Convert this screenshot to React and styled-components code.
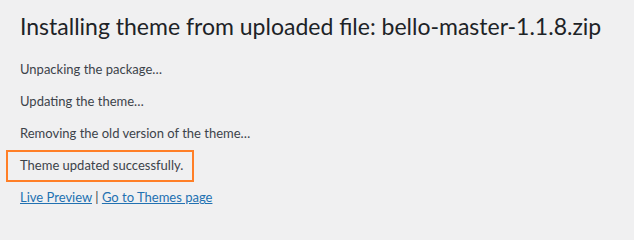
import React from 'react';
import styled, { createGlobalStyle } from 'styled-components';

const GlobalStyle = createGlobalStyle`
  html, body { margin: 0; padding: 0; background: #f0f0f1; }
  body { font-family: Lato, "Liberation Sans", Arial, sans-serif; color: #3c434a; }
`;

const Wrap = styled.div`
  padding: 12px 20px 20px;
`;

const Title = styled.h1`
  margin: 0 0 18.5px;
  font-size: 23px;
  font-weight: 400;
  line-height: 1.3;
  color: #1d2327;
`;

const Steps = styled.div`
  display: flex;
  flex-direction: column;
  gap: 13px;
`;

const Step = styled.p`
  margin: 0;
  font-size: 13px;
  line-height: 19px;
  color: #3c434a;
`;

const Highlight = styled(Step)`
  align-self: flex-start;
  border: 2px solid #ff7f27;
  padding: 4.5px 9px 4.5px 12px;
  margin: -6.5px 0 -6.5px -14px;
`;

const Link = styled.a`
  color: #2271b1;
  text-decoration: underline;
  cursor: pointer;
`;

export default function App() {
  return (
    <>
      <GlobalStyle />
      <Wrap>
        <Title>Installing theme from uploaded file: bello-master-1.1.8.zip</Title>
        <Steps>
          <Step>Unpacking the package…</Step>
          <Step>Updating the theme…</Step>
          <Step>Removing the old version of the theme…</Step>
          <Highlight>Theme updated successfully.</Highlight>
          <Step>
            <Link href="#">Live Preview</Link> | <Link href="#">Go to Themes page</Link>
          </Step>
        </Steps>
      </Wrap>
    </>
  );
}
